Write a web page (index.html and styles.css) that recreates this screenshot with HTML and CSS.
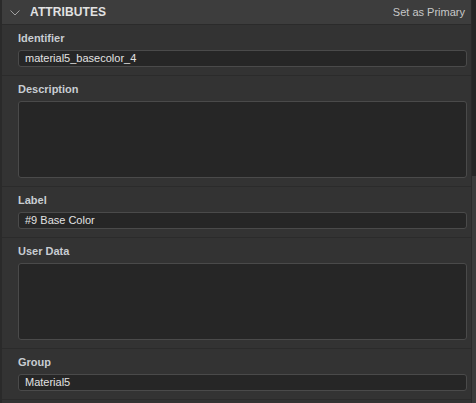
FILE: index.html
```html
<!DOCTYPE html>
<html>
<head>
<meta charset="utf-8">
<link rel="stylesheet" href="styles.css">
</head>
<body>
<div class="frame">
  <div class="panel">
    <div class="header">
      <svg class="chev" width="10" height="6" viewBox="0 0 10 6"><path d="M0.5 0.5 L5 5 L9.5 0.5" fill="none" stroke="#a0a0a0" stroke-width="1"/></svg>
      <span class="title">ATTRIBUTES</span>
      <span class="action">Set as Primary</span>
    </div>
    <div class="field">
      <div class="label">Identifier</div>
      <div class="input">material5_basecolor_4</div>
    </div>
    <div class="field">
      <div class="label">Description</div>
      <div class="textarea"></div>
    </div>
    <div class="field">
      <div class="label">Label</div>
      <div class="input">#9 Base Color</div>
    </div>
    <div class="field">
      <div class="label">User Data</div>
      <div class="textarea"></div>
    </div>
    <div class="field">
      <div class="label">Group</div>
      <div class="input">Material5</div>
    </div>
  </div>
  <div class="scrollbar"><div class="thumb"></div></div>
</div>
</body>
</html>
```

FILE: styles.css
```css
html, body {
  margin: 0;
  padding: 0;
  background: #333333;
}
body {
  width: 476px;
  height: 403px;
  overflow: hidden;
  font-family: "Liberation Sans", Arial, sans-serif;
}
.frame {
  display: flex;
  height: 403px;
}
.panel {
  flex: 1;
  border-left: 2px solid #2a2a2a;
  background: #333333;
  display: flex;
  flex-direction: column;
}
.header {
  height: 25px;
  box-sizing: border-box;
  background: #3d3d3d;
  border-bottom: 1px solid #2b2b2b;
  display: flex;
  align-items: center;
  padding: 0 6px 0 8px;
}
.chev {
  margin-right: 10px;
  margin-top: 1px;
}
.title {
  color: #e2e2e2;
  font-weight: bold;
  font-size: 12px;
  letter-spacing: 0.1px;
}
.action {
  margin-left: auto;
  color: #c8c8c8;
  font-size: 11px;
}
.field {
  padding: 7px 4px 8px 16px;
  border-bottom: 1px solid #2b2b2b;
}
.label {
  color: #c8cdd2;
  font-weight: bold;
  font-size: 11px;
  height: 13px;
  line-height: 13px;
  margin-bottom: 5px;
}
.input {
  height: 15px;
  line-height: 15px;
  background: #262626;
  border: 1px solid #4a4a4a;
  border-radius: 3px;
  color: #e2e2e2;
  font-size: 11px;
  padding: 0 6px;
}
.textarea {
  height: 75px;
  background: #262626;
  border: 1px solid #4a4a4a;
  border-radius: 3px;
}
.scrollbar {
  width: 4px;
  border-left: 1px solid #2a2a2a;
  background: #3b3b3b;
}
.thumb {
  height: 176px;
  background: #262626;
}
```
